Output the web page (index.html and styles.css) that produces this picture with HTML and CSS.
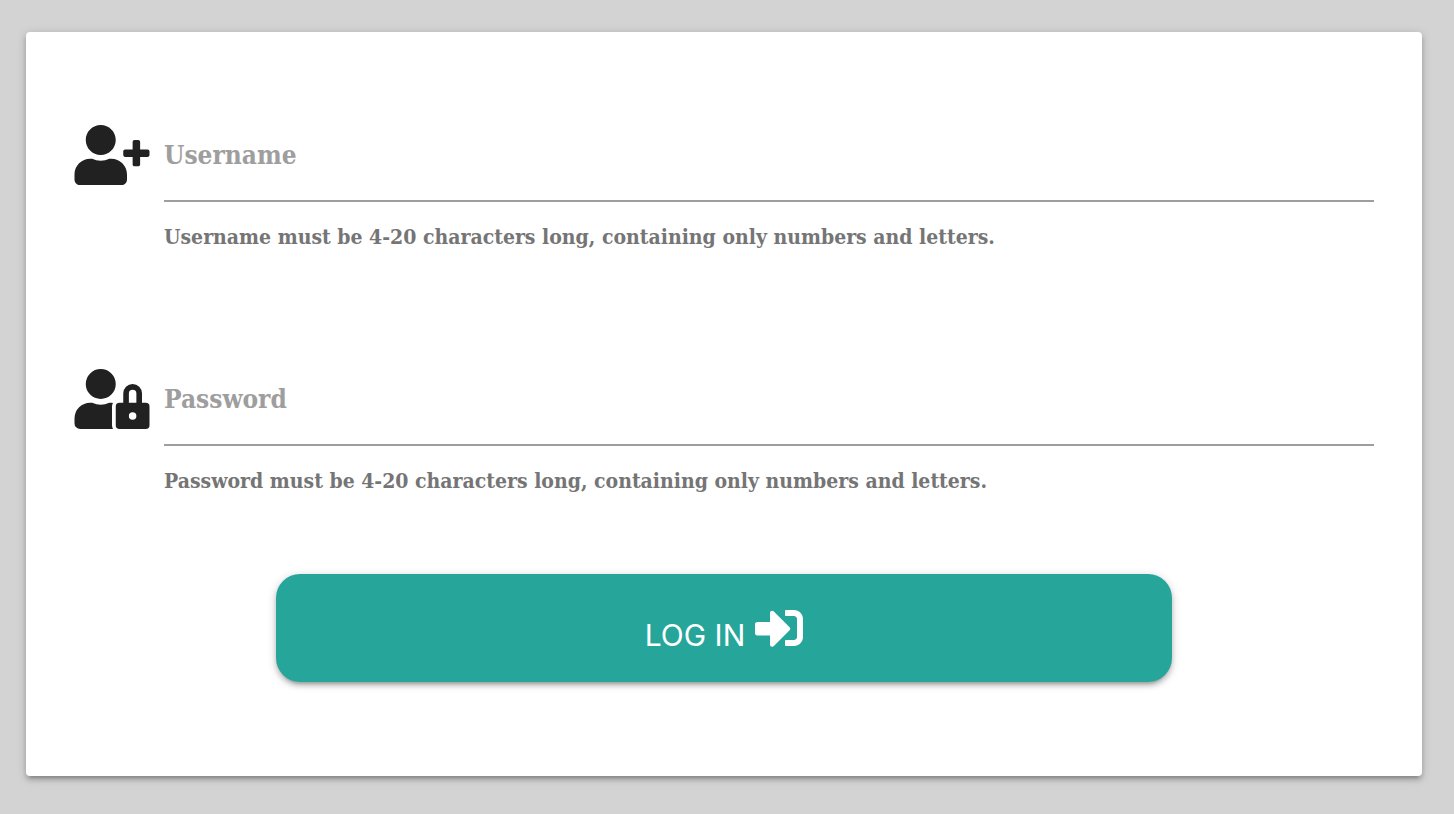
FILE: index.html
```html
<!DOCTYPE html>
<html lang="en">
<head>
<meta charset="utf-8">
<meta name="viewport" content="width=device-width, initial-scale=1">
<title>Log in</title>
<link rel="stylesheet" href="styles.css">
</head>
<body>
<main class="card">
  <form class="login-form">
    <div class="field">
      <svg class="field-icon" viewBox="0 0 640 512" aria-hidden="true"><path d="M624 208h-64v-64c0-8.800-7.200-16-16-16h-32c-8.800 0-16 7.200-16 16v64h-64c-8.800 0-16 7.200-16 16v32c0 8.800 7.200 16 16 16h64v64c0 8.800 7.200 16 16 16h32c8.800 0 16-7.200 16-16v-64h64c8.800 0 16-7.200 16-16v-32c0-8.800-7.200-16-16-16zm-400 48c70.700 0 128-57.300 128-128S294.700 0 224 0 96 57.300 96 128s57.300 128 128 128zm89.600 32h-16.700c-22.200 10.200-46.900 16-72.900 16s-50.600-5.800-72.900-16h-16.700C60.200 288 0 348.200 0 422.400V464c0 26.500 21.500 48 48 48h352c26.500 0 48-21.500 48-48v-41.600c0-74.200-60.200-134.400-134.400-134.400z"/></svg>
      <div class="field-body">
        <div class="field-control">
          <input class="field-input" id="username" type="text" placeholder=" " autocomplete="username" aria-describedby="username-help">
          <label class="field-label" for="username">Username</label>
        </div>
        <span class="field-help" id="username-help">Username must be 4-20 characters long, containing only numbers and letters.</span>
      </div>
    </div>
    <div class="field">
      <svg class="field-icon" viewBox="0 0 640 512" aria-hidden="true"><path d="M224 256A128 128 0 1 0 96 128a128 128 0 0 0 128 128zm96 64a63.080 63.080 0 0 1 8.100-30.500c-4.800-.5-9.500-1.500-14.500-1.500h-16.700a174.080 174.080 0 0 1-145.800 0h-16.700A134.430 134.430 0 0 0 0 422.400V464a48 48 0 0 0 48 48h280.900a63.540 63.540 0 0 1-8.900-32zm288-32h-32v-80a80 80 0 0 0-160 0v80h-32a32 32 0 0 0-32 32v160a32 32 0 0 0 32 32h224a32 32 0 0 0 32-32V320a32 32 0 0 0-32-32zM496 432a32 32 0 1 1 32-32 32 32 0 0 1-32 32zm32-144h-64v-80a32 32 0 0 1 64 0z"/></svg>
      <div class="field-body">
        <div class="field-control">
          <input class="field-input" id="password" type="password" placeholder=" " autocomplete="current-password" aria-describedby="password-help">
          <label class="field-label" for="password">Password</label>
        </div>
        <span class="field-help" id="password-help">Password must be 4-20 characters long, containing only numbers and letters.</span>
      </div>
    </div>
    <button class="submit" type="submit">
      <span>LOG IN</span>
      <svg class="submit-icon" viewBox="0 0 512 512" aria-hidden="true"><path d="M416 448h-84c-6.600 0-12-5.400-12-12v-40c0-6.600 5.400-12 12-12h84c17.700 0 32-14.300 32-32V160c0-17.700-14.300-32-32-32h-84c-6.600 0-12-5.400-12-12V76c0-6.600 5.400-12 12-12h84c53 0 96 43 96 96v192c0 53-43 96-96 96zm-47-201L201 79c-15-15-41-4.500-41 17v96H24c-13.300 0-24 10.700-24 24v96c0 13.300 10.700 24 24 24h136v96c0 21.500 26 32 41 17l168-168c9.300-9.400 9.300-24.600 0-34z"/></svg>
    </button>
  </form>
</main>
</body>
</html>
```
FILE: styles.css
```css
* {
  box-sizing: border-box;
}

body {
  margin: 0;
  padding: 32px 32px 38px 26px;
  background: #d3d3d3;
  color: #212121;
  font-family: "DejaVu Serif Condensed", "DejaVu Serif", serif;
  font-weight: 700;
}

.card {
  padding: 80px 48px 94px;
  background: #fff;
  border-radius: 4px;
  box-shadow: 0 4px 4px rgba(0, 0, 0, 0.14), 0 6px 2px -4px rgba(0, 0, 0, 0.12), 0 2px 10px rgba(0, 0, 0, 0.2);
}

.login-form {
  display: flex;
  flex-direction: column;
}

.field {
  display: flex;
  gap: 14px;
  min-height: 244px;
}

.field-icon {
  flex: none;
  width: 76px;
  height: 60px;
  margin-top: 13px;
  fill: #212121;
}

.field-body {
  flex: 1;
  min-width: 0;
}

.field-control {
  display: grid;
}

.field-input,
.field-label {
  grid-area: 1 / 1;
}

.field-input {
  width: 100%;
  height: 90px;
  padding: 0;
  border: 0;
  border-bottom: 2px solid #9e9e9e;
  outline: 0;
  background: transparent;
  color: #212121;
  font: inherit;
  font-size: 26px;
}

.field-label {
  align-self: center;
  justify-self: start;
  padding-bottom: 4px;
  color: #9e9e9e;
  font-size: 26px;
  line-height: 36px;
  pointer-events: none;
}

.field-input:focus {
  border-color: #26a69a;
}

.field-input:focus + .field-label,
.field-input:not(:placeholder-shown) + .field-label {
  align-self: start;
  font-size: 21px;
  line-height: 20px;
}

.field-help {
  display: block;
  margin-top: 20px;
  color: #757575;
  font-size: 21px;
  line-height: 30px;
}

.submit {
  display: flex;
  align-self: center;
  align-items: center;
  justify-content: center;
  gap: 10px;
  width: 100%;
  max-width: 896px;
  height: 108px;
  margin-top: -26px;
  padding: 0;
  border: 0;
  border-radius: 24px;
  background: #26a69a;
  box-shadow: 0 4px 4px rgba(0, 0, 0, 0.14), 0 6px 2px -4px rgba(0, 0, 0, 0.12), 0 2px 10px rgba(0, 0, 0, 0.2);
  color: #fff;
  font: 400 30px/36px Inter, "Liberation Sans", sans-serif;
  cursor: pointer;
}

.submit span {
  padding-top: 14px;
}

.submit-icon {
  width: 48px;
  height: 48px;
  fill: currentColor;
}
```
